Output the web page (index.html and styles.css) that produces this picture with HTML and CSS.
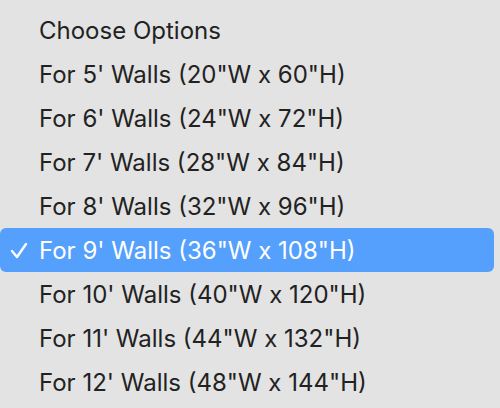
FILE: index.html
```html
<!DOCTYPE html>
<html>
<head>
<meta charset="utf-8">
<link rel="stylesheet" href="styles.css">
</head>
<body>
<ul class="menu">
  <li class="item"><span class="check"></span><span class="label">Choose Options</span></li>
  <li class="item"><span class="check"></span><span class="label">For 5' Walls (20"W x 60"H)</span></li>
  <li class="item"><span class="check"></span><span class="label">For 6' Walls (24"W x 72"H)</span></li>
  <li class="item"><span class="check"></span><span class="label">For 7' Walls (28"W x 84"H)</span></li>
  <li class="item"><span class="check"></span><span class="label">For 8' Walls (32"W x 96"H)</span></li>
  <li class="item selected"><span class="check"><svg width="18" height="17" viewBox="0 0 18 17"><path d="M2 9 L7 15 L16 2" fill="none" stroke="#fff" stroke-width="2.4" stroke-linecap="round" stroke-linejoin="round"/></svg></span><span class="label">For 9' Walls (36"W x 108"H)</span></li>
  <li class="item"><span class="check"></span><span class="label">For 10' Walls (40"W x 120"H)</span></li>
  <li class="item"><span class="check"></span><span class="label">For 11' Walls (44"W x 132"H)</span></li>
  <li class="item"><span class="check"></span><span class="label">For 12' Walls (48"W x 144"H)</span></li>
</ul>
</body>
</html>
```
FILE: styles.css
```css
html, body {
  margin: 0;
  padding: 0;
  background: #e3e3e3;
  width: 500px;
  height: 408px;
  overflow: hidden;
}
.menu {
  list-style: none;
  margin: 0;
  padding: 8px 6px 0 0;
  display: flex;
  flex-direction: column;
  font-family: Inter, "Noto Sans", sans-serif;
  font-size: 24px;
  color: #222222;
}
.item {
  height: 44px;
  display: flex;
  align-items: center;
  border-radius: 6px;
}
.check {
  width: 39px;
  flex: none;
  display: flex;
  padding-left: 10px;
  box-sizing: border-box;
}
.selected {
  background: #55a0fd;
  color: #ffffff;
}
```
